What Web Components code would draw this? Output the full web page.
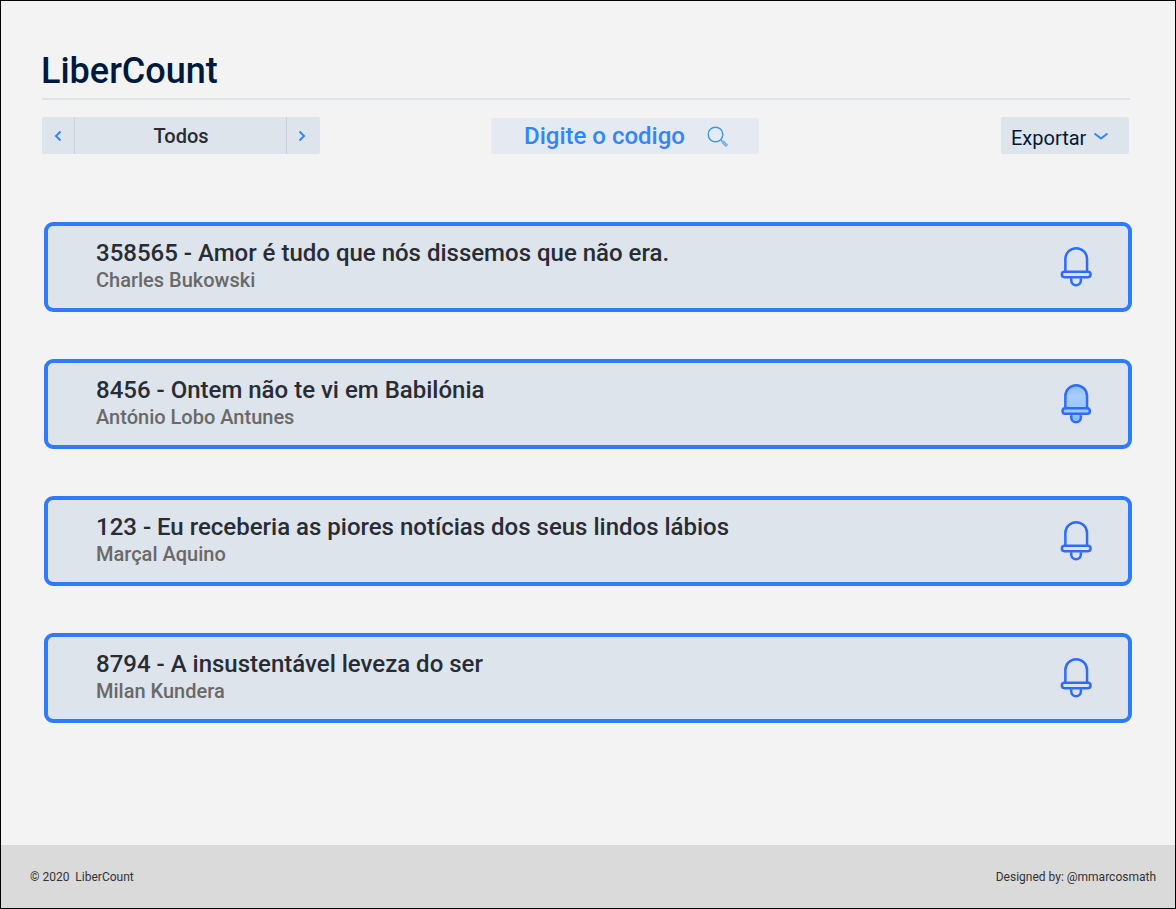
<!DOCTYPE html>
<html lang="pt"><head><meta charset="utf-8"><title>LiberCount</title>
<style>
html,body{margin:0;padding:0;height:100%}
body{font-family:Roboto,"Liberation Sans",sans-serif}
</style></head><body>
<app-shell>
  <app-header slot="header" title-text="LiberCount"></app-header>
  <app-toolbar slot="header"></app-toolbar>
  <book-card code="358565" name="Amor é tudo que nós dissemos que não era." author="Charles Bukowski"></book-card>
  <book-card code="8456" name="Ontem não te vi em Babilónia" author="António Lobo Antunes" active></book-card>
  <book-card code="123" name="Eu receberia as piores notícias dos seus lindos lábios" author="Marçal Aquino"></book-card>
  <book-card code="8794" name="A insustentável leveza do ser" author="Milan Kundera"></book-card>
  <app-footer slot="footer"></app-footer>
</app-shell>
<script>
function def(name, css, html){
  customElements.define(name, class extends HTMLElement{
    connectedCallback(){
      if(this.shadowRoot) return;
      const r=this.attachShadow({mode:'open'});
      r.innerHTML='<style>'+css+'</style>'+(typeof html==='function'?html(this):html);
    }
  });
}
def('app-shell',`
:host{display:flex;flex-direction:column;box-sizing:border-box;width:1176px;height:909px;border:1px solid #000;background:#f3f3f3;overflow:hidden}
.head{padding:0 45px 0 40px}
main{flex:1;display:flex;flex-direction:column;gap:47px;padding:67px 43px 0 43px}
`,`<div class="head"><slot name="header"></slot></div><main><slot></slot></main><slot name="footer"></slot>`);
def('app-header',`
:host{display:block;padding-top:48px}
h1{margin:0;font:500 36px/44px Roboto,sans-serif;color:#001a3d;height:49px}
hr{margin:0 0 0 1px;border:0;height:2px;background:#e0e3e8}
`,h=>`<h1>${h.getAttribute('title-text')}</h1><hr>`);
def('app-toolbar',`
:host{display:flex;align-items:flex-start;margin:17px 0 0 1px;height:38px}
.pager{display:flex;width:278px;height:37px;background:#dee4eb;border-radius:2px;font:500 20px/39px Roboto,sans-serif;color:#282c34}
.pager b{font-weight:500;flex:1;text-align:center;border-left:1px solid #c6d0de;border-right:1px solid #c6d0de;padding-left:1px}
.arrow{width:32px;display:flex;align-items:center;justify-content:center;padding-top:1px;box-sizing:border-box}
.arrow.r{width:33px;padding-right:3px}
.search{width:268px;height:36px;margin:1px 0 0 171px;background:#e5e9f1;border-radius:2px;display:flex;align-items:center;justify-content:center;gap:22px;font:500 24px/36px Roboto,sans-serif;color:#2f86ff;padding-left:3px;box-sizing:border-box}
.search svg{margin-top:2px}
.exp{margin-left:auto;width:128px;height:37px;margin-right:1px;box-sizing:border-box;padding-left:10px;background:#dee4eb;border-radius:2px;display:flex;align-items:center;gap:7px;font:400 20px/37px Roboto,sans-serif;color:#001a3d}
.exp span{position:relative;top:3px}
.exp svg{margin-top:2px}
`,`<div class="pager">
<div class="arrow"><svg width="10" height="14" viewBox="0 0 10 14" fill="none" stroke="#2f86ff" stroke-width="2"><path d="M7.500 2.500 3 7l4.500 4.500"/></svg></div>
<b>Todos</b>
<div class="arrow r"><svg width="10" height="14" viewBox="0 0 10 14" fill="none" stroke="#2f86ff" stroke-width="2"><path d="M2.500 2.500 7 7l-4.500 4.500"/></svg></div>
</div>
<div class="search"><span>Digite o codigo</span><svg width="22" height="22" viewBox="0 0 22 22" fill="none"><circle cx="8.500" cy="8.500" r="7.300" stroke="#3f98e0" stroke-width="1.400"/><path d="M14 14l1.500 1.500" stroke="#3f98e0" stroke-width="1.400"/><path d="M15.500 15.500l4.500 4.500" stroke="#5d9fdc" stroke-width="3"/><path d="M15.500 15.500l4.500 4.500" stroke="#93c0ea" stroke-width="1.200"/></svg></div>
<div class="exp"><span>Exportar</span><svg width="16" height="9" viewBox="0 0 16 9" fill="none" stroke="#2f86ff" stroke-width="2"><path d="M1.500 1.500 8 6.500l6.500-5"/></svg></div>`);
const bell=a=>`<svg width="34" height="42" viewBox="0 0 34 42" fill="none" stroke="#2f6bff" stroke-width="2.500"><g transform="translate(.2 .15)">
${a?`<defs><linearGradient id="b" x1="0" y1="0" x2="0" y2="1"><stop offset="0" stop-color="#8ebcfb"/><stop offset=".45" stop-color="#a6cdfc"/><stop offset="1" stop-color="#9cc6fb"/></linearGradient></defs><path stroke="none" fill="url(#b)" d="M6.150 26V13.850A10.850 10.850 0 0 1 27.850 13.850V26Z"/>`:''}
<path d="M12 33v2.200a4.850 4.850 0 0 0 9.700 0V33"${a?' fill="#8dbdfb"':''}/>
<path d="M6.150 26V13.850A10.850 10.850 0 0 1 27.850 13.850V26"/>
${a?`<rect x="3.400" y="26.200" width="27.200" height="5.400" rx="2.600" fill="#9cc8fb"/>`:`<rect x="2.650" y="26.700" width="28.700" height="5.300" rx="2.600"/>`}
</g></svg>`;
def('book-card',`
:host{display:flex;align-items:center;box-sizing:border-box;height:90px;width:1088px;border:4px solid #2f7bff;border-radius:9px;background:#dee4eb;padding:0 35px 0 48px}
.t{flex:1;align-self:flex-start;padding-top:12px;display:flex;flex-direction:column}
.n{font:500 24px/30px Roboto,sans-serif;color:#282c34}
.a{font:500 20px/24px Roboto,sans-serif;color:#696969}
svg{display:block;margin-top:-2px}
`,h=>`<div class="t"><div class="n">${h.getAttribute('code')} - ${h.getAttribute('name')}</div><div class="a">${h.getAttribute('author')}</div></div>${bell(h.hasAttribute('active'))}`);
def('app-footer',`
:host{display:flex;justify-content:space-between;align-items:center;height:63px;flex:none;box-sizing:border-box;padding:0 19px 0 29px;background:#dadada;font:400 12px/16px Roboto,sans-serif;color:#333}
`,`<span>© 2020&nbsp; LiberCount</span><span>Designed by: @mmarcosmath</span>`);
</script>
</body></html>
